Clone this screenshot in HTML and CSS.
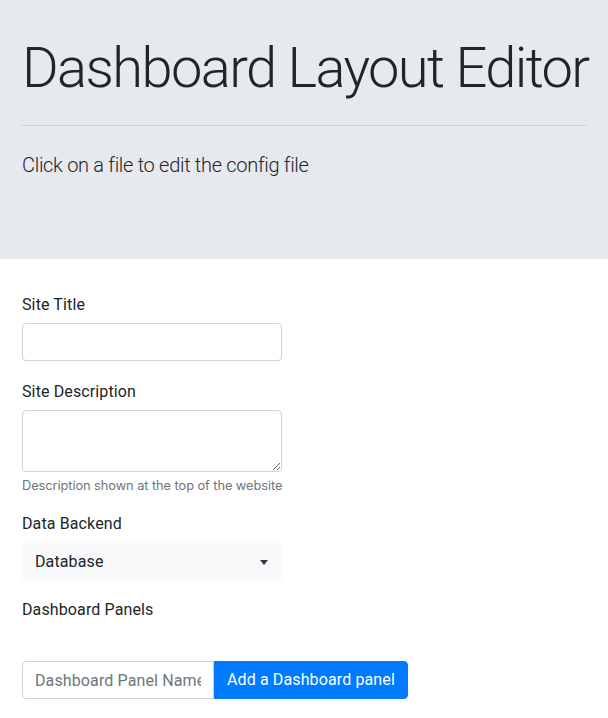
FILE: index.html
```html
<!DOCTYPE html>
<html lang="en">
<head>
<meta charset="utf-8">
<title>Dashboard Layout Editor</title>
<link rel="stylesheet" href="styles.css">
</head>
<body>
<header class="jumbotron">
  <h1 class="display">Dashboard Layout Editor</h1>
  <hr class="divider">
  <p class="lead">Click on a file to edit the config file</p>
</header>
<main class="content">
  <form class="editor-form">
    <div class="form-group">
      <label class="field-label" for="site-title">Site Title</label>
      <input class="form-control" id="site-title" type="text">
    </div>
    <div class="form-group description">
      <label class="field-label" for="site-desc">Site Description</label>
      <textarea class="form-control textarea" id="site-desc" rows="2"></textarea>
      <small class="form-text">Description shown at the top of the website</small>
    </div>
    <div class="form-group backend">
      <label class="field-label backend-label" for="backend">Data Backend</label>
      <div class="select">
        <span class="select-value">Database</span>
        <svg class="caret" width="8" height="5" viewBox="0 0 8 5"><path d="M0 0h8L4 5z" fill="#343a40"/></svg>
      </div>
    </div>
    <div class="form-group panels">
      <label class="field-label">Dashboard Panels</label>
    </div>
    <div class="input-group">
      <input class="form-control group-input" type="text" placeholder="Dashboard Panel Name">
      <button class="btn-primary" type="button">Add a Dashboard panel</button>
    </div>
  </form>
</main>
</body>
</html>
```

FILE: styles.css
```css
* { box-sizing: border-box; }
html, body { margin: 0; padding: 0; }
body {
  font-family: "Roboto", "Liberation Sans", sans-serif;
  font-size: 16px;
  line-height: 1.5;
  letter-spacing: 0.12px;
  color: #212529;
  background: #fff;
}
.jumbotron {
  background: #e6e9ed;
  padding: 35px 22px 63px;
}
.display {
  margin: 0;
  font-size: 56px;
  font-weight: 300;
  line-height: 1.2;
  letter-spacing: -1.6px;
  white-space: nowrap;
}
.divider {
  margin: 23px 0 24px;
  border: 0;
  border-top: 1px solid rgba(0, 0, 0, 0.1);
}
.lead {
  margin: 0 0 16px;
  font-size: 20px;
  font-weight: 300;
  line-height: 30px;
  letter-spacing: -0.3px;
}
.content {
  padding: 34px 22px 0;
}
.form-group { margin-bottom: 19px; }
.field-label {
  display: block;
  line-height: 24px;
  margin-bottom: 6px;
}
.form-control {
  display: block;
  width: 260px;
  height: 38px;
  padding: 6px 12px;
  font-family: inherit;
  font-size: 16px;
  line-height: 24px;
  letter-spacing: inherit;
  color: #495057;
  background: #fff;
  border: 1px solid #ced4da;
  border-radius: 4px;
}
.textarea {
  height: 62px;
  resize: vertical;
}
.form-text {
  display: block;
  margin-top: 4px;
  font-family: "Inter", "Roboto", sans-serif;
  font-size: 12.8px;
  line-height: 19.2px;
  letter-spacing: -0.06px;
  color: #6c757d;
}
.description { margin-bottom: 17px; }
.backend-label { margin-bottom: 7px; }
.backend { margin-bottom: 17px; }
.select {
  display: flex;
  align-items: center;
  justify-content: space-between;
  width: 260px;
  height: 38px;
  padding: 0 14px 0 13px;
  background: #f8f9fa;
  border-radius: 4px;
}
.caret { display: block; }
.panels { margin-bottom: 39px; }
.input-group {
  display: flex;
}
.group-input {
  width: 192px;
  border-radius: 4px 0 0 4px;
}
.group-input::placeholder { color: #6c757d; opacity: 1; }
.btn-primary {
  height: 38px;
  padding: 6px 12px;
  font-family: inherit;
  font-size: 16px;
  line-height: 24px;
  letter-spacing: inherit;
  color: #fff;
  background: #007bff;
  border: 1px solid #007bff;
  border-radius: 0 4px 4px 0;
}
```
